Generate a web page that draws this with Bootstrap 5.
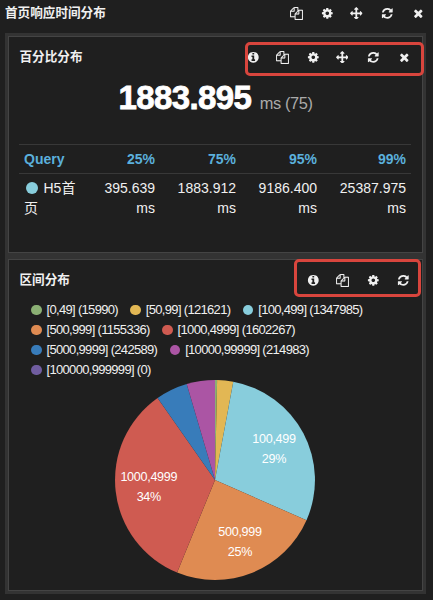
<!DOCTYPE html>
<html lang="zh-CN">
<head>
<meta charset="utf-8">
<meta name="viewport" content="width=device-width, initial-scale=1">
<title>首页响应时间分布</title>
<link href="https://cdn.jsdelivr.net/npm/bootstrap@5.3.0/dist/css/bootstrap.min.css" rel="stylesheet">
<style>
body{background:#1f1f1f;color:#f0f0f0;font-family:"Liberation Sans","Noto Sans CJK SC",sans-serif;font-size:14px;line-height:20px;width:433px;height:600px}
.row-title{font-size:12.6px;font-weight:600;line-height:20px}
.top-bar{height:33px;padding:3px 0 0 5px}
.board{width:421px;height:561px;margin-left:5px;padding:3px;background:#333;gap:6px}
.panel{background:#1f1f1f;border:1px solid #444;width:415px}
.panel-a{height:217px}
.panel-b{height:332px}
.panel-head{padding:10px 0 0 10.5px}
.tools{font-size:0}
.tool{width:30px;height:20px}
.tool svg{width:12.6px;height:12.6px;fill:#f0f0f0}
.t-copy svg{width:13px;height:13px}
.t-info{margin-right:-1px}
.t-copy{margin-right:1px}
.t-cog{margin-right:-1px}
.t-arrows{margin-right:1px}
.t-refresh{margin-right:.7px}
.tools-a{margin-right:3.2px}
.stat{height:40px;margin-top:11px;padding-left:109.5px}
.stat b{font-size:33px;letter-spacing:-.6px;color:#fff;line-height:40px;-webkit-text-stroke:.8px #fff}
.stat span{font-size:16.4px;letter-spacing:-.4px;color:#aaa;margin-left:8.5px}
.stats-table{width:392px;margin:26px 0 0 10px;table-layout:fixed;border-collapse:collapse}
.stats-table th{color:#5bb0dc;height:29px}
.stats-table th,.stats-table td{border-top:1px solid #383838;padding:4px 5px;line-height:20px;vertical-align:top}
.stats-table td:first-child{padding-right:2px}
.dot{display:inline-block;width:12px;height:12px;border-radius:50%;background:#88cddc;vertical-align:-1px;margin:0 5.5px 0 2px}
.legend-box{padding:10px 0 0 22px;font-size:13px;letter-spacing:-.68px}
.legend-line{height:20px;gap:12.4px}
.key{gap:5px}
.key i{width:10.5px;height:10.5px;border-radius:50%}
.pie{width:200px;height:200px;margin:0 0 0 106px}
.pie text{font-size:12.6px;letter-spacing:-.3px;fill:#fff;text-anchor:middle}
.outline{position:absolute;border:3px solid #d8453d;border-radius:5px;pointer-events:none}
.outline-a{left:245px;top:42px;width:179px;height:34px}
.outline-b{left:294px;top:259px;width:127px;height:38px}
.g0{background:#8bb074}.g1{background:#e2b754}.g2{background:#88cddc}.g3{background:#df8b52}.g4{background:#cf5b51}.g5{background:#387cba}.g6{background:#ab55a4}.g7{background:#705da0}
</style>
<script src="https://cdn.jsdelivr.net/npm/bootstrap@5.3.0/dist/js/bootstrap.bundle.min.js"></script>
</head>
<body class="position-relative overflow-hidden">
<svg class="d-none" xmlns="http://www.w3.org/2000/svg">
<symbol id="info" viewBox="0 0 1792 1792"><path d="M1152 1376v-160q0-14-9-23t-23-9h-96v-512q0-14-9-23t-23-9h-320q-14 0-23 9t-9 23v160q0 14 9 23t23 9h96v320h-96q-14 0-23 9t-9 23v160q0 14 9 23t23 9h448q14 0 23-9t9-23zm-128-896v-160q0-14-9-23t-23-9h-192q-14 0-23 9t-9 23v160q0 14 9 23t23 9h192q14 0 23-9t9-23zm640 416q0 209-103 385.5t-279.5 279.5-385.5 103-385.5-103-279.5-279.5-103-385.5 103-385.5 279.5-279.5 385.5-103 385.5 103 279.5 279.5 103 385.5z"/></symbol>
<symbol id="copy" viewBox="0 0 1792 1792"><path stroke="#f0f0f0" stroke-width="20" d="M1696 384q40 0 68 28t28 68v1216q0 40-28 68t-68 28h-960q-40 0-68-28t-28-68v-288h-544q-40 0-68-28t-28-68v-672q0-40 20-88t48-76l408-408q28-28 76-48t88-20h416q40 0 68 28t28 68v328q68-40 128-40h416zm-544 213l-299 299h299v-299zm-640-384l-299 299h299v-299zm196 647l316-316v-416h-384v416q0 40-28 68t-68 28h-416v640h512v-256q0-40 20-88t48-76zm956 804v-1152h-384v416q0 40-28 68t-68 28h-416v640h896z"/></symbol>
<symbol id="cog" viewBox="0 0 1792 1792"><path d="M1152 896q0-106-75-181t-181-75-181 75-75 181 75 181 181 75 181-75 75-181zm512-109v222q0 12-8 23t-20 13l-185 28q-19 54-39 91 35 50 107 138 10 12 10 25t-9 23q-27 37-99 108t-94 71q-12 0-26-9l-138-108q-44 23-91 38-16 136-29 186-7 28-36 28h-222q-14 0-24.5-8.5t-11.5-21.5l-28-184q-49-16-90-37l-141 107q-10 9-25 9-14 0-25-11-126-114-165-168-7-10-7-23 0-12 8-23 15-21 51-66.5t54-70.5q-27-50-41-99l-183-27q-13-2-21-12.5t-8-23.5v-222q0-12 8-23t19-13l186-28q14-46 39-92-40-57-107-138-10-12-10-24 0-10 9-23 26-36 98.5-107.5t94.5-71.5q13 0 26 10l138 107q44-23 91-38 16-136 29-186 7-28 36-28h222q14 0 24.5 8.5t11.5 21.5l28 184q49 16 90 37l142-107q9-9 24-9 13 0 25 10 129 119 165 170 7 8 7 22 0 12-8 23-15 21-51 66.5t-54 70.5q26 50 41 98l183 28q13 2 21 12.5t8 23.5z"/></symbol>
<symbol id="arrows" viewBox="0 0 1792 1792"><path d="M1792 896q0 26-19 45l-256 256q-19 19-45 19t-45-19-19-45v-128h-384v384h128q26 0 45 19t19 45-19 45l-256 256q-19 19-45 19t-45-19l-256-256q-19-19-19-45t19-45 45-19h128v-384h-384v128q0 26-19 45t-45 19-45-19l-256-256q-19-19-19-45t19-45l256-256q19-19 45-19t45 19 19 45v128h384v-384h-128q-26 0-45-19t-19-45 19-45l256-256q19-19 45-19t45 19l256 256q19 19 19 45t-19 45-45 19h-128v384h384v-128q0-26 19-45t45-19 45 19l256 256q19 19 19 45z"/></symbol>
<symbol id="refresh" viewBox="0 0 1792 1792"><path d="M1639 1056q0 5-1 7-64 268-268 434.5t-478 166.5q-146 0-282.5-55t-243.5-157l-129 129q-19 19-45 19t-45-19-19-45v-448q0-26 19-45t45-19h448q26 0 45 19t19 45-19 45l-137 137q71 66 161 102t187 36q134 0 250-65t186-179q11-17 53-117 8-23 30-23h192q13 0 22.5 9.5t9.5 22.5zm25-800v448q0 26-19 45t-45 19h-448q-26 0-45-19t-19-45 19-45l138-138q-148-137-349-137-134 0-250 65t-186 179q-11 17-53 117-8 23-30 23h-199q-13 0-22.5-9.5t-9.5-22.5v-7q65-268 270-434.5t480-166.5q146 0 284 55.5t245 156.5l130-129q19-19 45-19t45 19 19 45z"/></symbol>
<symbol id="times" viewBox="0 0 1792 1792"><path d="M1490 1322q0 40-28 68l-136 136q-28 28-68 28t-68-28l-294-294-294 294q-28 28-68 28t-68-28l-136-136q-28-28-28-68t28-68l294-294-294-294q-28-28-28-68t28-68l136-136q28-28 68-28t68 28l294 294 294-294q28-28 68-28t68 28l136 136q28 28 28 68t-28 68l-294 294 294 294q28 28 28 68z"/></symbol>
</svg>

<header class="top-bar d-flex justify-content-between">
  <div class="row-title">首页响应时间分布</div>
  <div class="tools d-flex">
    <span class="tool t-copy d-flex align-items-center justify-content-center"><svg><use href="#copy"/></svg></span>
    <span class="tool t-cog d-flex align-items-center justify-content-center"><svg><use href="#cog"/></svg></span>
    <span class="tool t-arrows d-flex align-items-center justify-content-center"><svg><use href="#arrows"/></svg></span>
    <span class="tool t-refresh d-flex align-items-center justify-content-center"><svg><use href="#refresh"/></svg></span>
    <span class="tool d-flex align-items-center justify-content-center"><svg><use href="#times"/></svg></span>
  </div>
</header>

<main class="board d-flex flex-column">
  <section class="panel panel-a">
    <div class="panel-head d-flex justify-content-between">
      <div class="row-title">百分比分布</div>
      <div class="tools tools-a d-flex">
        <span class="tool t-info d-flex align-items-center justify-content-center"><svg><use href="#info"/></svg></span>
        <span class="tool t-copy d-flex align-items-center justify-content-center"><svg><use href="#copy"/></svg></span>
        <span class="tool t-cog d-flex align-items-center justify-content-center"><svg><use href="#cog"/></svg></span>
        <span class="tool t-arrows d-flex align-items-center justify-content-center"><svg><use href="#arrows"/></svg></span>
        <span class="tool t-refresh d-flex align-items-center justify-content-center"><svg><use href="#refresh"/></svg></span>
        <span class="tool d-flex align-items-center justify-content-center"><svg><use href="#times"/></svg></span>
      </div>
    </div>
    <div class="stat d-flex align-items-baseline"><b>1883.895</b><span>ms (75)</span></div>
    <table class="stats-table">
      <colgroup><col width="61"><col width="80"><col width="81"><col width="81"><col width="89"></colgroup>
      <thead><tr><th>Query</th><th class="text-end">25%</th><th class="text-end">75%</th><th class="text-end">95%</th><th class="text-end">99%</th></tr></thead>
      <tbody><tr><td><span class="dot"></span>H5首页</td><td class="text-end">395.639 ms</td><td class="text-end">1883.912 ms</td><td class="text-end">9186.400 ms</td><td class="text-end">25387.975 ms</td></tr></tbody>
    </table>
  </section>

  <section class="panel panel-b">
    <div class="panel-head d-flex justify-content-between">
      <div class="row-title">区间分布</div>
      <div class="tools d-flex me-1">
        <span class="tool t-info d-flex align-items-center justify-content-center"><svg><use href="#info"/></svg></span>
        <span class="tool t-copy d-flex align-items-center justify-content-center"><svg><use href="#copy"/></svg></span>
        <span class="tool d-flex align-items-center justify-content-center"><svg><use href="#cog"/></svg></span>
        <span class="tool d-flex align-items-center justify-content-center"><svg><use href="#refresh"/></svg></span>
      </div>
    </div>
    <div class="legend-box">
      <div class="legend-line d-flex">
        <span class="key d-flex align-items-center"><i class="g0"></i>[0,49] (15990)</span>
        <span class="key d-flex align-items-center"><i class="g1"></i>[50,99] (121621)</span>
        <span class="key d-flex align-items-center"><i class="g2"></i>[100,499] (1347985)</span>
      </div>
      <div class="legend-line d-flex">
        <span class="key d-flex align-items-center"><i class="g3"></i>[500,999] (1155336)</span>
        <span class="key d-flex align-items-center"><i class="g4"></i>[1000,4999] (1602267)</span>
      </div>
      <div class="legend-line d-flex">
        <span class="key d-flex align-items-center"><i class="g5"></i>[5000,9999] (242589)</span>
        <span class="key d-flex align-items-center"><i class="g6"></i>[10000,99999] (214983)</span>
      </div>
      <div class="legend-line d-flex">
        <span class="key d-flex align-items-center"><i class="g7"></i>[100000,999999] (0)</span>
      </div>
    </div>
    <svg class="pie d-block" viewBox="0 0 200 200">
      <path fill="#8bb074" d="M100 100V0A100 100 0 0 1 102.1 0Z"/>
      <path fill="#e2b754" d="M100 100L102.1 0A100 100 0 0 1 118.3 1.7Z"/>
      <path fill="#88cddc" d="M100 100L118.3 1.7A100 100 0 0 1 191.5 140.3Z"/>
      <path fill="#df8b52" d="M100 100L191.5 140.3A100 100 0 0 1 62.1 192.5Z"/>
      <path fill="#cf5b51" d="M100 100L62.1 192.5A100 100 0 0 1 42.6 18.1Z"/>
      <path fill="#387cba" d="M100 100L42.6 18.1A100 100 0 0 1 71.7 4.1Z"/>
      <path fill="#ab55a4" d="M100 100L71.7 4.1A100 100 0 0 1 100 0Z"/>
      <text x="159" y="63.3">100,499</text><text x="159" y="83.3">29%</text>
      <text x="125" y="156.3">500,999</text><text x="125" y="176.3">25%</text>
      <text x="33.8" y="101.3">1000,4999</text><text x="33.8" y="121.3">34%</text>
    </svg>
  </section>
</main>
<div class="outline outline-a"></div>
<div class="outline outline-b"></div>
</body>
</html>
